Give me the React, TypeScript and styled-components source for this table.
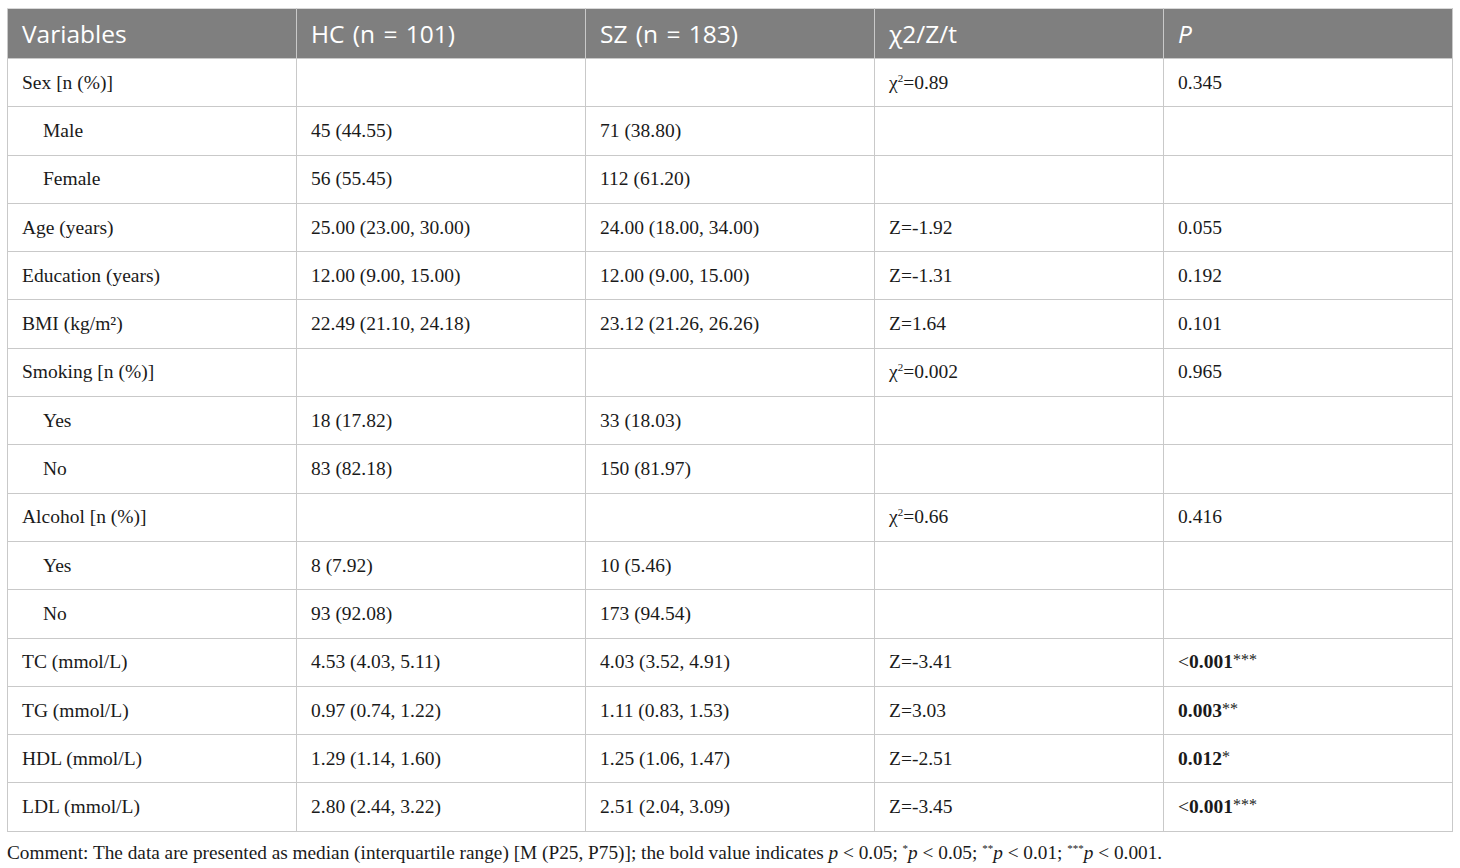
import React from 'react';
import styled, { createGlobalStyle } from 'styled-components';

const HEAD_BG = '#7f7f7f';
const LINE    = '#c9c9c9';
const INK     = '#1a1a1a';
const SERIF   = `'Liberation Serif', 'DejaVu Serif', serif`;
const SANS    = `'Open Sans', 'Noto Sans', sans-serif`;

const Global = createGlobalStyle`
  html, body { margin: 0; padding: 0; background: #fff; }
  body { width: 1460px; height: 868px; overflow: hidden; }
`;

const Page = styled.div`
  padding: 8px 7px 0 7px;
  font-family: ${SERIF};
  color: ${INK};
`;

const Table = styled.table`
  width: 1446px;
  border-collapse: collapse;
  table-layout: fixed;
`;

const HeadCell = styled.th<{ $italic?: boolean }>`
  background: ${HEAD_BG};
  color: #fff;
  font-family: ${SANS};
  font-weight: 400;
  font-size: 24.5px;
  font-style: ${p => (p.$italic ? 'italic' : 'normal')};
  text-align: left;
  height: 49px;
  padding: 0 14px;
  border: 1px solid ${LINE};
  border-top-color: #d8d8d8;
  word-spacing: 2px;
`;

const Cell = styled.td<{ $indent?: boolean; $bold?: boolean }>`
  height: 47.3px;
  padding: 0 14px 0 ${p => (p.$indent ? 35 : 14)}px;
  font-size: 19.5px;
  font-weight: ${p => (p.$bold ? 700 : 400)};
  border: 1px solid ${LINE};
  white-space: nowrap;
  vertical-align: middle;
`;

const Plain = styled.span`
  font-weight: 400;
`;

const Stars = styled.span`
  font-weight: 400;
  font-size: 16px;
  position: relative;
  top: -3px;
`;

const Sup = styled.sup`
  font-size: 11px;
  vertical-align: 7px;
  line-height: 0;
`;

const Comment = styled.div`
  font-size: 19.3px;
  margin-top: 10px;
  white-space: nowrap;
`;

type Row = {
  label: string;
  indent?: boolean;
  hc?: string;
  sz?: string;
  stat?: React.ReactNode;
  p?: string;
  lt?: boolean;
  stars?: string;
};

const chi = (v: string) => (
  <>
    χ<Sup>2</Sup>={v}
  </>
);

const ROWS: Row[] = [
  { label: 'Sex [n (%)]', stat: chi('0.89'), p: '0.345' },
  { label: 'Male', indent: true, hc: '45 (44.55)', sz: '71 (38.80)' },
  { label: 'Female', indent: true, hc: '56 (55.45)', sz: '112 (61.20)' },
  { label: 'Age (years)', hc: '25.00 (23.00, 30.00)', sz: '24.00 (18.00, 34.00)', stat: 'Z=-1.92', p: '0.055' },
  { label: 'Education (years)', hc: '12.00 (9.00, 15.00)', sz: '12.00 (9.00, 15.00)', stat: 'Z=-1.31', p: '0.192' },
  { label: 'BMI (kg/m²)', hc: '22.49 (21.10, 24.18)', sz: '23.12 (21.26, 26.26)', stat: 'Z=1.64', p: '0.101' },
  { label: 'Smoking [n (%)]', stat: chi('0.002'), p: '0.965' },
  { label: 'Yes', indent: true, hc: '18 (17.82)', sz: '33 (18.03)' },
  { label: 'No', indent: true, hc: '83 (82.18)', sz: '150 (81.97)' },
  { label: 'Alcohol [n (%)]', stat: chi('0.66'), p: '0.416' },
  { label: 'Yes', indent: true, hc: '8 (7.92)', sz: '10 (5.46)' },
  { label: 'No', indent: true, hc: '93 (92.08)', sz: '173 (94.54)' },
  { label: 'TC (mmol/L)', hc: '4.53 (4.03, 5.11)', sz: '4.03 (3.52, 4.91)', stat: 'Z=-3.41', p: '0.001', lt: true, stars: '***' },
  { label: 'TG (mmol/L)', hc: '0.97 (0.74, 1.22)', sz: '1.11 (0.83, 1.53)', stat: 'Z=3.03', p: '0.003', stars: '**' },
  { label: 'HDL (mmol/L)', hc: '1.29 (1.14, 1.60)', sz: '1.25 (1.06, 1.47)', stat: 'Z=-2.51', p: '0.012', stars: '*' },
  { label: 'LDL (mmol/L)', hc: '2.80 (2.44, 3.22)', sz: '2.51 (2.04, 3.09)', stat: 'Z=-3.45', p: '0.001', lt: true, stars: '***' },
];

export default function App() {
  return (
    <Page>
      <Global />
      <Table>
        <thead>
          <tr>
            <HeadCell>Variables</HeadCell>
            <HeadCell>HC (n = 101)</HeadCell>
            <HeadCell>SZ (n = 183)</HeadCell>
            <HeadCell>χ2/Z/t</HeadCell>
            <HeadCell $italic>P</HeadCell>
          </tr>
        </thead>
        <tbody>
          {ROWS.map((r, i) => (
            <tr key={i}>
              <Cell $indent={r.indent}>{r.label}</Cell>
              <Cell>{r.hc}</Cell>
              <Cell>{r.sz}</Cell>
              <Cell>{r.stat}</Cell>
              <Cell $bold={!!r.stars}>
                {r.lt && <Plain>&lt;</Plain>}
                {r.p}
                {r.stars && <Stars>{r.stars}</Stars>}
              </Cell>
            </tr>
          ))}
        </tbody>
      </Table>
      <Comment>
        Comment: The data are presented as median (interquartile range) [M (P25, P75)]; the bold value indicates{' '}
        <i>p</i> &lt; 0.05; <Sup>*</Sup><i>p</i> &lt; 0.05; <Sup>**</Sup><i>p</i> &lt; 0.01; <Sup>***</Sup><i>p</i> &lt; 0.001.
      </Comment>
    </Page>
  );
}
